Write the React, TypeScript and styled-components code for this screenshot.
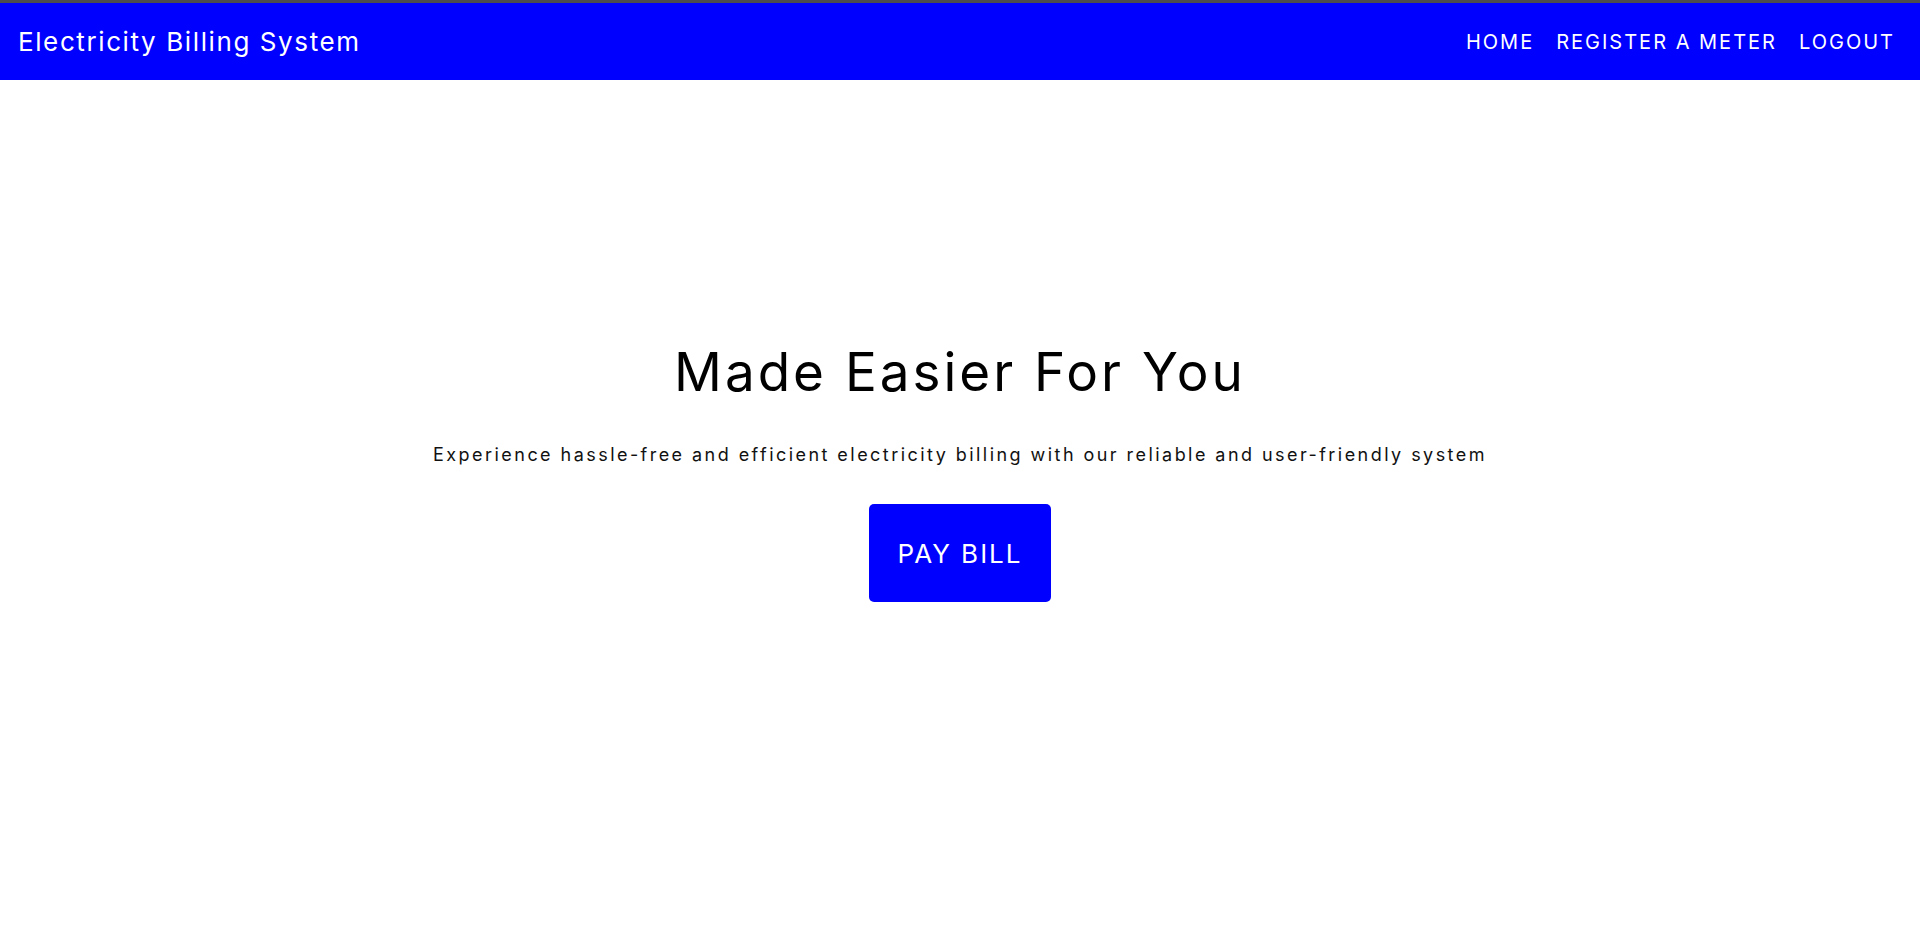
import React from "react";
import styled, { createGlobalStyle } from "styled-components";

const Global = createGlobalStyle`
  html, body { margin: 0; padding: 0; background: #ffffff; }
  body { font-family: Inter, "Open Sans", sans-serif; }
  * { box-sizing: border-box; }
`;

const Header = styled.header`
  display: flex;
  align-items: center;
  justify-content: space-between;
  height: 80px;
  padding: 0 25px 0 18px;
  background: #0000ff;
  border-top: 3px solid #4d4d4d;
`;

const Logo = styled.a`
  color: #ffffff;
  font-size: 26px;
  font-weight: 400;
  text-decoration: none;
  letter-spacing: 1.6px;
`;

const Nav = styled.nav`
  display: flex;
  align-items: center;
  gap: 22px;
`;

const NavLink = styled.a`
  color: #ffffff;
  font-size: 20px;
  font-weight: 400;
  text-decoration: none;
  text-transform: uppercase;
  letter-spacing: 2px;
`;

const Hero = styled.main`
  display: flex;
  flex-direction: column;
  align-items: center;
  padding-top: 260px;
`;

const Title = styled.h1`
  margin: 0;
  font-size: 53px;
  font-weight: 400;
  line-height: 64px;
  color: #000000;
  letter-spacing: 3px;
`;

const Lead = styled.p`
  margin: 38px 0 0;
  font-size: 18px;
  line-height: 25px;
  color: #111111;
  letter-spacing: 2.45px;
`;

const PayButton = styled.button`
  margin-top: 37px;
  width: 182px;
  height: 98px;
  border: none;
  border-radius: 5px;
  background: #0000ff;
  color: #ffffff;
  font-family: inherit;
  font-size: 26px;
  font-weight: 400;
  letter-spacing: 2px;
  cursor: pointer;
`;

export default function App() {
  return (
    <>
      <Global />
      <Header>
        <Logo href="#">Electricity Billing System</Logo>
        <Nav>
          <NavLink href="#">Home</NavLink>
          <NavLink href="#">Register a meter</NavLink>
          <NavLink href="#">Logout</NavLink>
        </Nav>
      </Header>
      <Hero>
        <Title>Made Easier For You</Title>
        <Lead>
          Experience hassle-free and efficient electricity billing with our reliable and user-friendly system
        </Lead>
        <PayButton>PAY BILL</PayButton>
      </Hero>
    </>
  );
}
